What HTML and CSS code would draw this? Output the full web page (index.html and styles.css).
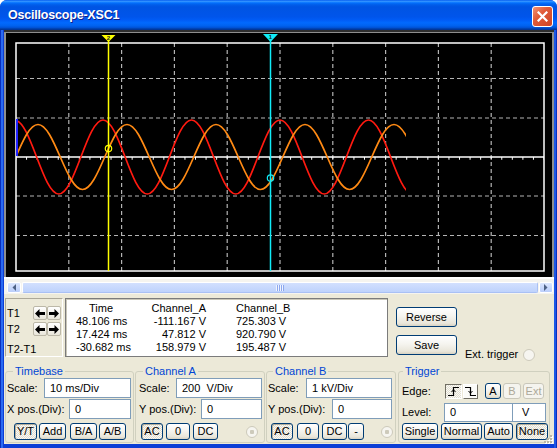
FILE: index.html
```html
<!DOCTYPE html>
<html lang="en">
<head>
<meta charset="utf-8">
<title>Oscilloscope-XSC1</title>
<link rel="stylesheet" href="styles.css">
</head>
<body>
<div class="window">
  <header class="titlebar">
    <span class="title">Oscilloscope-XSC1</span>
    <button class="close" aria-label="Close">
      <svg width="11" height="11" viewBox="0 0 11 11"><path d="M1.5 1.5L9.5 9.5M9.5 1.5L1.5 9.5" stroke="#fff" stroke-width="2.2" stroke-linecap="square"/></svg>
    </button>
  </header>

  <div class="client">
    <div class="screen">
      <svg class="scope" width="550" height="250" viewBox="4 30 550 250">
        <defs>
          <clipPath id="trace-area"><rect x="17" y="43" width="389" height="228"/></clipPath>
        </defs>
        <!-- bezel -->
        <rect x="4" y="30" width="550" height="250" fill="#f4f3ee"/>
        <rect x="4" y="30" width="550" height="249" fill="#ffffff"/>
        <rect x="4" y="30" width="550" height="247" fill="#8e8e8e"/>
        <rect x="4" y="30" width="550" height="2" fill="#2e2e2e"/>
        <rect x="6" y="33" width="546" height="244" fill="#000"/>

        <!-- graticule -->
        <g stroke="#b4b4b4" stroke-width="1.2" stroke-dasharray="4 3" fill="none">
          <path d="M68.8 43V271M121.6 43V271M174.4 43V271M227.2 43V271M280 43V271M332.8 43V271M385.6 43V271M438.4 43V271M491.2 43V271"/>
          <path d="M16 78.5H544M16 118H544M16 196H544M16 235.5H544"/>
        </g>
        <rect x="16" y="43" width="528" height="228" fill="none" stroke="#fff" stroke-width="1.5"/>
        <path d="M16 157H544" stroke="#fff" stroke-width="1.5"/>
        <path d="M16 158.4H544" stroke="#fff" stroke-width="2.8" stroke-dasharray="1 9.56" stroke-dashoffset="0.5"/>

        <!-- channel traces -->
        <g clip-path="url(#trace-area)" fill="none" stroke-width="1.7" stroke-linejoin="round">
          <path stroke="#ff1a10" d="M14.5 120c8.007 0 14.909 18.045 22.125 37
            s14.118 37 22.125 37s14.909 -18.045 22.125 -37s14.118 -37 22.125 -37s14.909 18.045 22.125 37
            s14.118 37 22.125 37s14.909 -18.045 22.125 -37s14.118 -37 22.125 -37s14.909 18.045 22.125 37
            s14.118 37 22.125 37s14.909 -18.045 22.125 -37s14.118 -37 22.125 -37s14.909 18.045 22.125 37
            s14.118 37 22.125 37s14.909 -18.045 22.125 -37s14.118 -37 22.125 -37s14.909 18.045 22.125 37
            s14.118 37 22.125 37s14.909 -18.045 22.125 -37s14.118 -37 22.125 -37s14.909 18.045 22.125 37"/>
          <path stroke="#ff8a14" d="M15.75 157c7.257 -16.65 14.198 -32.5 22.25 -32.5
            s14.993 15.85 22.25 32.5s14.198 32.5 22.25 32.5s14.993 -15.85 22.25 -32.5s14.198 -32.5 22.25 -32.5
            s14.993 15.85 22.25 32.5s14.198 32.5 22.25 32.5s14.993 -15.85 22.25 -32.5s14.198 -32.5 22.25 -32.5
            s14.993 15.85 22.25 32.5s14.198 32.5 22.25 32.5s14.993 -15.85 22.25 -32.5s14.198 -32.5 22.25 -32.5
            s14.993 15.85 22.25 32.5s14.198 32.5 22.25 32.5s14.993 -15.85 22.25 -32.5s14.198 -32.5 22.25 -32.5
            s14.993 15.85 22.25 32.5s14.198 32.5 22.25 32.5s14.993 -15.85 22.25 -32.5s14.198 -32.5 22.25 -32.5"/>
        </g>
        <path d="M17 119V156" stroke="#2222ff" stroke-width="2"/>

        <!-- cursors -->
        <path d="M108.5 40V271" stroke="#ffff00" stroke-width="1.5"/>
        <path d="M270.5 40V271" stroke="#10ecf8" stroke-width="1.5"/>
        <polygon points="101.5,35 115.5,35 108.5,42" fill="#ffff00"/>
        <text x="108.5" y="39.6" font-size="6" font-weight="bold" text-anchor="middle" fill="#222" font-family="Liberation Sans, sans-serif">2</text>
        <polygon points="263,34 278,34 270.5,42" fill="#10ecf8"/>
        <text x="270.5" y="39.4" font-size="6" font-weight="bold" text-anchor="middle" fill="#222" font-family="Liberation Sans, sans-serif">1</text>
        <circle cx="108.5" cy="148.5" r="3.2" fill="none" stroke="#ffff00" stroke-width="1.2"/>
        <circle cx="270.5" cy="178" r="3.2" fill="none" stroke="#10ecf8" stroke-width="1.2"/>
      </svg>
    </div>

    <div class="hscroll">
      <span class="sb-btn">
        <svg width="4" height="7" viewBox="0 0 4 7"><path d="M4 0L0.5 3.5L4 7z" fill="#4d6185"/></svg>
      </span>
      <span class="sb-thumb"><span class="grip"></span></span>
      <span class="sb-btn">
        <svg width="4" height="7" viewBox="0 0 4 7"><path d="M0 0L3.5 3.5L0 7z" fill="#4d6185"/></svg>
      </span>
    </div>

    <div class="panel">
      <div class="readout">
        <div class="cursors">
          <div class="crow">
            <span class="clabel">T1</span>
            <button class="arrow"><svg width="10" height="9" viewBox="0 0 10 9"><polygon points="0,4.5 4.5,0 4.5,3 10,3 10,6 4.5,6 4.5,9"/></svg></button>
            <button class="arrow"><svg width="10" height="9" viewBox="0 0 10 9"><polygon points="10,4.5 5.5,0 5.5,3 0,3 0,6 5.5,6 5.5,9"/></svg></button>
          </div>
          <div class="crow">
            <span class="clabel">T2</span>
            <button class="arrow"><svg width="10" height="9" viewBox="0 0 10 9"><polygon points="0,4.5 4.5,0 4.5,3 10,3 10,6 4.5,6 4.5,9"/></svg></button>
            <button class="arrow"><svg width="10" height="9" viewBox="0 0 10 9"><polygon points="10,4.5 5.5,0 5.5,3 0,3 0,6 5.5,6 5.5,9"/></svg></button>
          </div>
          <div class="cdiff">T2-T1</div>
        </div>

        <div class="table">
          <div class="trow head"><span class="c1">Time</span><span class="c2">Channel_A</span><span class="c3">Channel_B</span></div>
          <div class="trow"><span class="c1">48.106 ms</span><span class="c2">-111.167 V</span><span class="c3">725.303 V</span></div>
          <div class="trow"><span class="c1">17.424 ms</span><span class="c2">47.812 V</span><span class="c3">920.790 V</span></div>
          <div class="trow"><span class="c1">-30.682 ms</span><span class="c2">158.979 V</span><span class="c3">195.487 V</span></div>
        </div>

        <div class="actions">
          <button class="xbtn act">Reverse</button>
          <button class="xbtn act">Save</button>
        </div>

        <div class="ext"><span>Ext. trigger</span><span class="radio"></span></div>
      </div>

      <div class="groups">
        <fieldset class="grp tb">
          <legend>Timebase</legend>
          <div class="frow r1"><span class="lbl">Scale:</span><span class="field">10 ms/Div</span></div>
          <div class="frow r2"><span class="lbl">X pos.(Div):</span><span class="field">0</span></div>
          <div class="brow">
            <button class="xbtn on b-yt">Y/T</button>
            <button class="xbtn b-add">Add</button>
            <button class="xbtn b-ba">B/A</button>
            <button class="xbtn b-ab">A/B</button>
          </div>
        </fieldset>

        <fieldset class="grp cha">
          <legend>Channel A</legend>
          <div class="frow r1"><span class="lbl">Scale:</span><span class="field">200  V/Div</span></div>
          <div class="frow r2"><span class="lbl">Y pos.(Div):</span><span class="field">0</span></div>
          <div class="brow">
            <button class="xbtn on b-ac">AC</button>
            <button class="xbtn b-zero">0</button>
            <button class="xbtn b-dc">DC</button>
            <span class="radio dot"></span>
          </div>
        </fieldset>

        <fieldset class="grp chb">
          <legend>Channel B</legend>
          <div class="frow r1"><span class="lbl">Scale:</span><span class="field">1 kV/Div</span></div>
          <div class="frow r2"><span class="lbl">Y pos.(Div):</span><span class="field">0</span></div>
          <div class="brow">
            <button class="xbtn on b-ac">AC</button>
            <button class="xbtn b-zero">0</button>
            <button class="xbtn b-dc">DC</button>
            <button class="xbtn b-minus">-</button>
            <span class="radio dot"></span>
          </div>
        </fieldset>

        <fieldset class="grp trg">
          <legend>Trigger</legend>
          <div class="erow">
            <span class="lbl">Edge:</span>
            <button class="edge down" aria-label="Rising edge">
              <svg width="13" height="11" viewBox="0 0 13 11"><path d="M1 9.5H6.5V1.5H12" fill="none" stroke="#000" stroke-width="1.2"/><path d="M4.5 6L6.5 3.8L8.5 6" fill="none" stroke="#000" stroke-width="1"/></svg>
            </button>
            <button class="edge up" aria-label="Falling edge">
              <svg width="13" height="11" viewBox="0 0 13 11"><path d="M1 1.5H6.5V9.5H12" fill="none" stroke="#000" stroke-width="1.2"/><path d="M4.5 5L6.5 7.2L8.5 5" fill="none" stroke="#000" stroke-width="1"/></svg>
            </button>
            <button class="xbtn b-a">A</button>
            <button class="xbtn off b-b">B</button>
            <button class="xbtn off b-ext">Ext</button>
          </div>
          <div class="lrow">
            <span class="lbl">Level:</span>
            <span class="field level">0</span>
            <span class="field unit">V</span>
          </div>
          <div class="brow">
            <button class="xbtn b-single">Single</button>
            <button class="xbtn b-normal">Normal</button>
            <button class="xbtn b-auto">Auto</button>
            <button class="xbtn on b-none">None</button>
          </div>
        </fieldset>
      </div>
    </div>
  </div>

  <svg class="sizegrip" width="9" height="9" viewBox="0 0 9 9">
    <g fill="#fff"><rect x="7" y="1" width="2" height="2"/><rect x="4" y="4" width="2" height="2"/><rect x="7" y="4" width="2" height="2"/><rect x="1" y="7" width="2" height="2"/><rect x="4" y="7" width="2" height="2"/><rect x="7" y="7" width="2" height="2"/></g>
    <g fill="#b9b6a6"><rect x="6" y="0" width="2" height="2"/><rect x="3" y="3" width="2" height="2"/><rect x="6" y="3" width="2" height="2"/><rect x="0" y="6" width="2" height="2"/><rect x="3" y="6" width="2" height="2"/><rect x="6" y="6" width="2" height="2"/></g>
  </svg>
</div>
</body>
</html>
```

FILE: styles.css
```css
* { box-sizing: border-box; }

html, body { margin: 0; padding: 0; background: #fff; }

body {
  width: 557px;
  height: 448px;
  overflow: hidden;
  font: 11px/13px "Liberation Sans", Arial, sans-serif;
  color: #000;
}

button {
  font: inherit;
  color: inherit;
  margin: 0;
  padding: 0;
}

/* ---------- window frame ---------- */
.window {
  position: relative;
  width: 557px;
  height: 448px;
  display: flex;
  flex-direction: column;
  border-radius: 7px 7px 0 0;
  overflow: hidden;
  background: linear-gradient(to right,
    #0a2fbd 0, #0a2fbd 1px, #2a6af2 1px, #2a6af2 3px, #0b3ed6 3px,
    #0b3ed6 554px, #1c57e6 554px, #1c57e6 556px, #0a2fbd 556px);
}

.titlebar {
  flex: none;
  height: 30px;
  display: flex;
  align-items: center;
  padding: 0 4px 0 8px;
  background: linear-gradient(to bottom,
    #0058ee 0%, #3593ff 4%, #288eff 6%, #127dff 8%, #036ffc 10%,
    #0262ee 14%, #0057e5 20%, #0054e3 24%, #0055eb 56%, #005bf5 66%,
    #026afe 76%, #0062ef 86%, #0052d6 92%, #0040ab 96%, #003092 100%);
}

.title {
  color: #fff;
  font: bold 12.5px/16px "Liberation Sans", Arial, sans-serif;
  letter-spacing: -0.2px;
  text-shadow: 1px 1px 0 #0f1f8a;
}

.close {
  margin-left: auto;
  margin-top: 2px;
  width: 21px;
  height: 21px;
  border: 1px solid #fff;
  border-radius: 3px;
  display: flex;
  align-items: center;
  justify-content: center;
  background: linear-gradient(135deg, #f39274 0%, #e05a37 40%, #cc4426 100%);
}

.client {
  flex: 1;
  display: flex;
  flex-direction: column;
  padding: 0 3px 4px 4px;
}

/* ---------- scope display ---------- */
.screen { flex: none; height: 250px; }
.scope { display: block; }

.hscroll {
  flex: none;
  height: 14px;
  display: flex;
  padding: 2px 1px 1px 3px;
  background: #f5f4ef;
}

.sb-btn {
  width: 14px;
  display: flex;
  align-items: center;
  justify-content: center;
  border: 1px solid #fff;
  border-radius: 2px;
  background: linear-gradient(#dbe6fe, #bacefb);
}

.sb-thumb {
  flex: 1;
  margin: 0 1px;
  display: flex;
  align-items: center;
  justify-content: center;
  border: 1px solid;
  border-color: #fff #a9c0f4 #a9c0f4 #fff;
  border-radius: 2px;
  background: linear-gradient(#d2e0fe, #bed2fc);
}

.grip {
  width: 8px;
  height: 6px;
  background: repeating-linear-gradient(to right, #f0f4ff 0 1px, #8ca8ee 1px 2px);
}

/* ---------- panel ---------- */
.panel {
  flex: 1;
  background: #ece9d8;
  padding-top: 4px;
}

.readout {
  display: flex;
  height: 59px;
}

.cursors {
  margin-left: 1px;
  width: 58px;
  border: 1px solid;
  border-color: #aca899 #fff #fff #aca899;
  padding: 7px 0 0 1px;
}

.crow {
  display: flex;
  align-items: center;
  height: 14px;
}
.crow + .crow { margin-top: 2px; }

.clabel { width: 26px; }

.arrow {
  width: 14px;
  height: 14px;
  display: flex;
  align-items: center;
  justify-content: center;
  border: 1px solid #bcb8a8;
  border-radius: 2px;
  background: linear-gradient(#ffffff, #e9e6da);
}
.arrow svg { fill: #000; }

.cdiff { margin-top: 7px; }

.table {
  margin-left: 2px;
  width: 323px;
  background: #fff;
  border: 1px solid #7b7b7b;
  box-shadow: inset 1px 1px 0 #c9c6b8;
  padding-top: 3px;
}

.trow {
  display: flex;
  height: 13px;
  white-space: nowrap;
}

.c1 { width: 60px; padding-left: 10px; text-align: right; }
.head .c1 { text-align: center; }
.c2 { width: 80px; text-align: right; }
.c3 { padding-left: 30px; }

.actions {
  margin-left: 8px;
  width: 61px;
  padding-top: 9px;
  display: flex;
  flex-direction: column;
}

.ext {
  margin-left: 8px;
  align-self: flex-end;
  margin-bottom: -4px;
  display: flex;
  align-items: center;
  white-space: nowrap;
}
.ext .radio { margin-left: 5px; }

.radio {
  flex: none;
  width: 12px;
  height: 12px;
  border-radius: 50%;
  border: 1px solid #cdcabb;
  background: #f6f5f0;
}
.radio.dot {
  background: radial-gradient(circle, #cdcabb 0 2px, #f6f5f0 2.5px);
}

/* ---------- buttons ---------- */
.xbtn {
  height: 17px;
  border: 1px solid #003c74;
  border-radius: 3px;
  line-height: 15px;
  text-align: center;
  background: linear-gradient(#ffffff, #f5f4ef 45%, #e9e6da 85%, #d8d2c2);
}
.xbtn.on {
  background: repeating-conic-gradient(#fbfaf6 0 25%, #e0ddd0 0 50%) 0 0 / 2px 2px;
  box-shadow: inset 1px 1px 0 #b3ae9c;
}
.xbtn.off {
  border-color: #c9c7ba;
  color: #aca899;
  background: #f5f4ee;
}
.xbtn.act {
  width: 61px;
  height: 20px;
  line-height: 18px;
}
.xbtn.act + .xbtn.act { margin-top: 8px; }

/* ---------- control groups ---------- */
.groups {
  display: flex;
  margin-top: 8px;
  height: 78px;
}

.grp {
  margin: 0;
  padding: 0;
  min-width: 0;
  height: 78px;
  border: 1px solid #d0d0bf;
  border-radius: 3px;
}

.grp legend {
  color: #0046d5;
  padding: 0 2px;
  margin-left: 6px;
  line-height: 13px;
}

.frow {
  display: flex;
  align-items: center;
  height: 20px;
  white-space: nowrap;
}
.frow + .frow { margin-top: 1px; }

.field {
  height: 20px;
  border: 1px solid #7f9db9;
  background: #fff;
  padding-left: 5px;
  line-height: 18px;
  white-space: pre;
}

.brow {
  display: flex;
  align-items: center;
  height: 17px;
  margin-top: 4px;
}

/* Timebase */
.tb { margin-left: 1px; width: 129px; }
.tb legend { margin-left: 7px; }
.tb .frow { margin-left: 1px; }
.tb .r1 .lbl { width: 37px; }
.tb .r1 .field { width: 87px; }
.tb .r2 .lbl { width: 62px; }
.tb .r2 .field { width: 62px; }
.tb .brow { margin-left: 8px; }
.b-yt { width: 23px; }
.b-add { width: 27px; margin-left: 2px; }
.b-ba { width: 27px; margin-left: 4px; }
.b-ab { width: 27px; margin-left: 2px; }

/* Channel A */
.cha { margin-left: 1px; width: 130px; }
.cha legend { margin-left: 7px; }
.cha .frow { margin-left: 3px; }
.cha .r1 .lbl { width: 37px; }
.cha .r1 .field { width: 86px; }
.cha .r2 .lbl { width: 62px; }
.cha .r2 .field { width: 61px; }
.cha .brow { margin-left: 5px; }
.cha .b-ac { width: 22px; }
.cha .b-zero { width: 24px; margin-left: 3px; }
.cha .b-dc { width: 25px; margin-left: 3px; }
.cha .radio { margin-left: 28px; }

/* Channel B */
.chb { margin-left: 1px; width: 130px; }
.chb .frow { margin-left: 1px; }
.chb .r1 .lbl { width: 38px; }
.chb .r1 .field { width: 86px; }
.chb .r2 .lbl { width: 64px; }
.chb .r2 .field { width: 60px; }
.chb .brow { margin-left: 4px; }
.chb .b-ac { width: 22px; }
.chb .b-zero { width: 22px; margin-left: 4px; }
.chb .b-dc { width: 25px; margin-left: 3px; }
.b-minus { width: 16px; margin-left: 1px; }
.chb .radio { margin-left: 17px; }

/* Trigger */
.trg { margin-left: 2px; width: 152px; }
.trg legend { margin-left: 4px; }

.erow {
  display: flex;
  align-items: center;
  height: 16px;
  margin: 5px 0 0 3px;
}
.erow .lbl { width: 43px; }

.edge {
  height: 15px;
  display: flex;
  align-items: center;
  justify-content: center;
  border: 1px solid;
}
.edge.down {
  width: 17px;
  border-color: #716f64 #fff #fff #716f64;
  background: repeating-conic-gradient(#fbfaf6 0 25%, #e0ddd0 0 50%) 0 0 / 2px 2px;
}
.edge.up {
  width: 15px;
  margin-left: 1px;
  border-color: #fff #716f64 #716f64 #fff;
  background: #fbfbf8;
}

.b-a { width: 16px; height: 16px; margin-left: 7px; }
.b-b { width: 18px; height: 16px; margin-left: 2px; }
.b-ext { width: 21px; height: 16px; margin-left: 2px; }

.lrow {
  display: flex;
  align-items: center;
  height: 19px;
  margin: 4px 0 0 3px;
}
.lrow .lbl { width: 42px; }
.field.level { width: 69px; height: 19px; line-height: 17px; }
.field.unit { width: 33px; height: 19px; line-height: 17px; border-left: 0; padding-left: 9px; }

.trg .brow { margin: 1px 0 0 3px; }
.b-single { width: 36px; }
.b-normal { width: 41px; margin-left: 3px; }
.b-auto { width: 29px; margin-left: 2px; }
.b-none { width: 32px; margin-left: 3px; }

/* resize grip in the lower right corner */
.sizegrip {
  position: absolute;
  right: 4px;
  bottom: 4px;
}
```
